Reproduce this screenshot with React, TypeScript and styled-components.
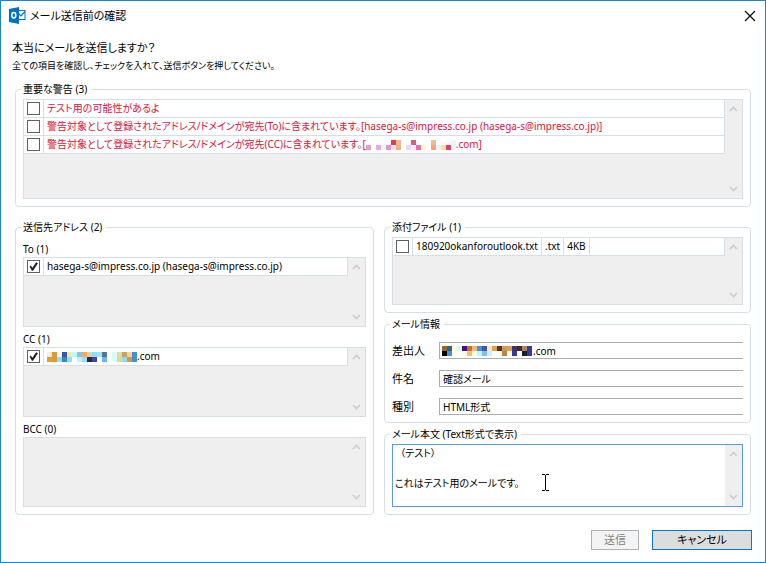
import React, { useId } from "react";
import styled, { createGlobalStyle } from "styled-components";

const line = "#d5dfe5";
const grey = "#efefef";
const red = "#dc143c";

const GlobalStyle = createGlobalStyle`
  *, *::before, *::after { box-sizing: border-box; }
  body {
    margin: 0;
    background: #fff;
    color: #000;
    font: 10px/16px "Noto Sans", "Noto Sans CJK JP", sans-serif;
    font-feature-settings: "palt";
  }
  button, input, textarea { font: inherit; font-feature-settings: inherit; color: inherit; }
`;

const Window = styled.main`
  display: flex;
  flex-direction: column;
  min-height: 100vh;
  border: 1px solid #1883d7;
`;

const TitleBar = styled.header`
  display: flex;
  align-items: center;
  gap: 4px;
  height: 29px;
  padding: 0 9px 0 8px;
`;

const Title = styled.h1`
  flex: 1;
  margin: 0;
  font-size: 11px;
  font-weight: 400;
`;

const CloseButton = styled.button`
  display: grid;
  place-items: center;
  width: 12px;
  height: 12px;
  padding: 0;
  border: 0;
  background: none;
`;

const Intro = styled.div`
  padding: 8px 11px 7px;
`;

const Question = styled.h2`
  margin: 0;
  font-size: 11px;
  line-height: 20px;
  font-weight: 400;
`;

const Note = styled.p`
  margin: 0;
  font-size: 9px;
  line-height: 16px;
`;

const Content = styled.div`
  display: flex;
  flex-direction: column;
  gap: 12px;
  padding: 0 14px;
`;

const Columns = styled.div`
  display: grid;
  grid-template-columns: minmax(0, 359fr) minmax(0, 367fr);
  gap: 10px;
`;

const Stack = styled.div`
  display: flex;
  flex-direction: column;
  gap: 3px;
`;

const Group = styled.fieldset`
  min-width: 0;
  margin: 0;
  padding: 1px 7px 7px;
  border: 1px solid ${line};
  border-radius: 4px;
`;

const Legend = styled.legend`
  margin-left: -2px;
  padding: 0 4px 0 2px;
  line-height: 17px;
`;

const ListLabel = styled.h3`
  margin: 0;
  padding-top: 5px;
  font-size: 10px;
  font-weight: 400;
  line-height: 15px;
`;

const ListBox = styled.div<{ $height: number }>`
  display: flex;
  min-height: ${(p) => p.$height}px;
  border: 1px solid ${line};
  background: ${grey};
`;

const ListBody = styled.div`
  flex: 1;
  min-width: 0;
`;

const Table = styled.table`
  width: 100%;
  border-spacing: 0;
  background: #fff;
`;

const Cell = styled.td<{ $fill?: boolean; $alert?: boolean }>`
  width: ${(p) => (p.$fill ? "100%" : "auto")};
  height: 18px;
  padding: 0 3px;
  border: solid ${line};
  border-width: 0 1px 1px 0;
  white-space: nowrap;
  line-height: 17px;
  color: ${(p) => (p.$alert ? red : "inherit")};
`;

const RowLabel = styled.label`
  display: flex;
  align-items: center;
`;

const Check = styled.input.attrs({ type: "checkbox" })`
  appearance: none;
  display: block;
  width: 13px;
  height: 13px;
  margin: 0;
  border: 1px solid #606060;
  background: #fff;
  &:checked::before {
    content: "";
    display: block;
    width: 11px;
    height: 11px;
    background: #212121;
    clip-path: polygon(14% 50%, 24% 42%, 40% 62%, 74% 12%, 90% 20%, 46% 88%, 36% 88%);
  }
`;

const ScrollBar = styled.div`
  display: flex;
  flex-direction: column;
  justify-content: space-between;
  align-items: center;
  flex: 0 0 17px;
  padding: 6px 0;
  background: ${grey};
`;

const Form = styled.div`
  display: flex;
  flex-direction: column;
  gap: 11px;
  padding-top: 8px;
`;

const FormRow = styled.div`
  display: grid;
  grid-template-columns: 47px minmax(0, 1fr);
  align-items: center;
`;

const FieldLabel = styled.label`
  font-size: 11px;
`;

const Field = styled.div`
  display: flex;
  align-items: center;
  height: 17px;
  padding-left: 2px;
  border: 1px solid #abadb3;
  border-right: 0;
`;

const FieldInput = styled.input`
  flex: 1;
  min-width: 0;
  height: 15px;
  padding: 0 0 0 1px;
  border: 0;
  outline: 0;
  background: none;
`;

const BodyFrame = styled.div`
  position: relative;
  display: flex;
  height: 63px;
  border: 1px solid #569de5;
`;

const BodyText = styled.textarea`
  flex: 1;
  min-width: 0;
  padding: 1px 2px;
  border: 0;
  outline: 0;
  resize: none;
  overflow: hidden;
  line-height: 15px;
`;

const Pointer = styled.svg`
  position: absolute;
  left: 148px;
  top: 29px;
`;

const Footer = styled.footer`
  display: flex;
  justify-content: flex-end;
  gap: 13px;
  padding: 15px 13px 12px;
`;

const Button = styled.button<{ $primary?: boolean }>`
  width: ${(p) => (p.$primary ? 100 : 48)}px;
  height: 20px;
  padding: 0;
  border: 1px solid ${(p) => (p.$primary ? "#0078d7" : "#adb2b5")};
  background: ${(p) => (p.$primary ? "#dddddd" : "#f4f4f4")};
  color: ${(p) => (p.$primary ? "#000" : "#838383")};
  font-size: 11px;
  line-height: 16px;
`;

const OutlookIcon = () => (
  <svg width="17" height="17" viewBox="0 0 17 17" aria-hidden="true">
    <rect x="9.5" y="3.5" width="6.5" height="9" fill="#fff" stroke="#0072c6" />
    <path d="M9.5 6.5L12 9L16 4.5" fill="none" stroke="#0072c6" strokeWidth="1.2" />
    <path d="M0 2L10 0V17L0 15Z" fill="#0072c6" />
    <ellipse cx="4.8" cy="8.3" rx="2" ry="2.7" fill="none" stroke="#fff" strokeWidth="1.5" />
  </svg>
);

const Chevron = ({ down }: { down?: boolean }) => (
  <svg width="9" height="6" viewBox="0 0 9 6" aria-hidden="true">
    <path d={down ? "M1 1L4.5 4.5L8 1" : "M1 5L4.5 1.5L8 5"} fill="none" stroke="#cdcdcd" strokeWidth="1.7" />
  </svg>
);

const Scroll = () => (
  <ScrollBar>
    <Chevron />
    <Chevron down />
  </ScrollBar>
);

const Mosaic = ({ rows }: { rows: string[] }) => {
  const cells = rows.map((r) => r.split(" "));
  return (
    <svg width={cells[0].length * 5} height="10" shapeRendering="crispEdges" aria-hidden="true">
      {cells.map((row, y) =>
        row.map((c, x) =>
          c === "-" ? null : <rect key={`${x}-${y}`} x={x * 5} y={y * 5} width="5" height="5" fill={`#${c}`} />
        )
      )}
    </svg>
  );
};

const warningMosaic = [
  "- - - - - e23c55 f5b890 - - e05a7c - - - f5b890 - - - eef3ff",
  "e29fc6 - dfaaec f4f8dc df97d4 ebdcf8 f5b183 - e8d8f8 eef2ff e46cb8 fdfdb8 - f5a66c eef2ff fae0a8 e2405f eef2ff",
];
const ccMosaic = [
  "ffeccb dd9a35 f8fbff 2f5ba8 ffe5a0 b8fff0 7cc6fb efad5a f3cd8c 8cdcff 9ce4ff 4f7889 fffff0 d6fbff dede9c c9a262 ffd08a 3f92d8",
  "e09d3f dd9a35 93dafd 3d83c0 93dafd - c9ebff a0d8ff 26264e 45459a - 62b8ff ffffee d8ffff dbd98f 8cdcff d49940 3f92d8",
];
const senderMosaic = [
  "a0622a 30667d ffffe0 d5faff 4a1080 c07038 fdb56b 3c96dd 4355a8 ffe8b8 e0a050 553428 cd985f d9a050 3b3570 3f2c2c b08458 3a3b98",
  "000000 3c96dd ffffee - ffffe0 e8c080 ffffd8 c8f0ff 80c0e8 c8f0ff - ffffee c08040 ffffee 3a3a98 - 15202c 3a3b98",
];

type RowProps = {
  children: React.ReactNode;
  checked?: boolean;
  alert?: boolean;
  extra?: string[];
};

const Row = ({ children, checked, alert, extra }: RowProps) => {
  const id = useId();
  return (
    <tr>
      <Cell>
        <Check id={id} defaultChecked={checked} />
      </Cell>
      <Cell $fill={!extra} $alert={alert}>
        <RowLabel htmlFor={id}>{children}</RowLabel>
      </Cell>
      {extra?.map((text) => <Cell key={text}>{text}</Cell>)}
      {extra && <Cell $fill />}
    </tr>
  );
};

const List = ({ height, children }: { height: number; children?: React.ReactNode }) => (
  <ListBox $height={height}>
    <ListBody>
      {children && (
        <Table>
          <tbody>{children}</tbody>
        </Table>
      )}
    </ListBody>
    <Scroll />
  </ListBox>
);

export default function App() {
  return (
    <>
      <GlobalStyle />
      <Window>
        <TitleBar>
          <OutlookIcon />
          <Title>メール送信前の確認</Title>
          <CloseButton aria-label="閉じる">
            <svg width="12" height="12" viewBox="0 0 12 12" aria-hidden="true">
              <path d="M1 1L11 11M11 1L1 11" stroke="#000" strokeWidth="1.1" />
            </svg>
          </CloseButton>
        </TitleBar>
        <Intro>
          <Question>本当にメールを送信しますか？</Question>
          <Note>全ての項目を確認し、チェックを入れて、送信ボタンを押してください。</Note>
        </Intro>
        <Content>
          <Group>
            <Legend>重要な警告 (3)</Legend>
            <List height={100}>
              <Row alert>テスト用の可能性があるよ</Row>
              <Row alert>
                警告対象として登録されたアドレス/ドメインが宛先(To)に含まれています。[hasega-s@impress.co.jp
                (hasega-s@impress.co.jp)]
              </Row>
              <Row alert>
                警告対象として登録されたアドレス/ドメインが宛先(CC)に含まれています。[
                <Mosaic rows={warningMosaic} />
                .com]
              </Row>
            </List>
          </Group>
          <Columns>
            <Group>
              <Legend>送信先アドレス (2)</Legend>
              <ListLabel>To (1)</ListLabel>
              <List height={70}>
                <Row checked>hasega-s@impress.co.jp (hasega-s@impress.co.jp)</Row>
              </List>
              <ListLabel>CC (1)</ListLabel>
              <List height={70}>
                <Row checked>
                  <Mosaic rows={ccMosaic} />
                  .com
                </Row>
              </List>
              <ListLabel>BCC (0)</ListLabel>
              <List height={70} />
            </Group>
            <Stack>
              <Group>
                <Legend>添付ファイル (1)</Legend>
                <List height={68}>
                  <Row extra={[".txt", "4KB"]}>180920okanforoutlook.txt</Row>
                </List>
              </Group>
              <Group>
                <Legend>メール情報</Legend>
                <Form>
                  <FormRow>
                    <FieldLabel htmlFor="sender">差出人</FieldLabel>
                    <Field>
                      <Mosaic rows={senderMosaic} />
                      <FieldInput id="sender" readOnly value=".com" />
                    </Field>
                  </FormRow>
                  <FormRow>
                    <FieldLabel htmlFor="subject">件名</FieldLabel>
                    <Field>
                      <FieldInput id="subject" readOnly value="確認メール" />
                    </Field>
                  </FormRow>
                  <FormRow>
                    <FieldLabel htmlFor="format">種別</FieldLabel>
                    <Field>
                      <FieldInput id="format" readOnly value="HTML形式" />
                    </Field>
                  </FormRow>
                </Form>
              </Group>
              <Group>
                <Legend>メール本文 (Text形式で表示)</Legend>
                <BodyFrame>
                  <BodyText
                    aria-label="メール本文"
                    readOnly
                    value={"  （テスト）\n\nこれはテスト用のメールです。"}
                  />
                  <Scroll />
                  <Pointer width="9" height="17" viewBox="0 0 9 17" aria-hidden="true">
                    <path d="M1 .5H4M5 .5H8M4.500 1V16M1 16.500H4M5 16.500H8" stroke="#000" fill="none" />
                  </Pointer>
                </BodyFrame>
              </Group>
            </Stack>
          </Columns>
        </Content>
        <Footer>
          <Button disabled>送信</Button>
          <Button $primary>キャンセル</Button>
        </Footer>
      </Window>
    </>
  );
}
